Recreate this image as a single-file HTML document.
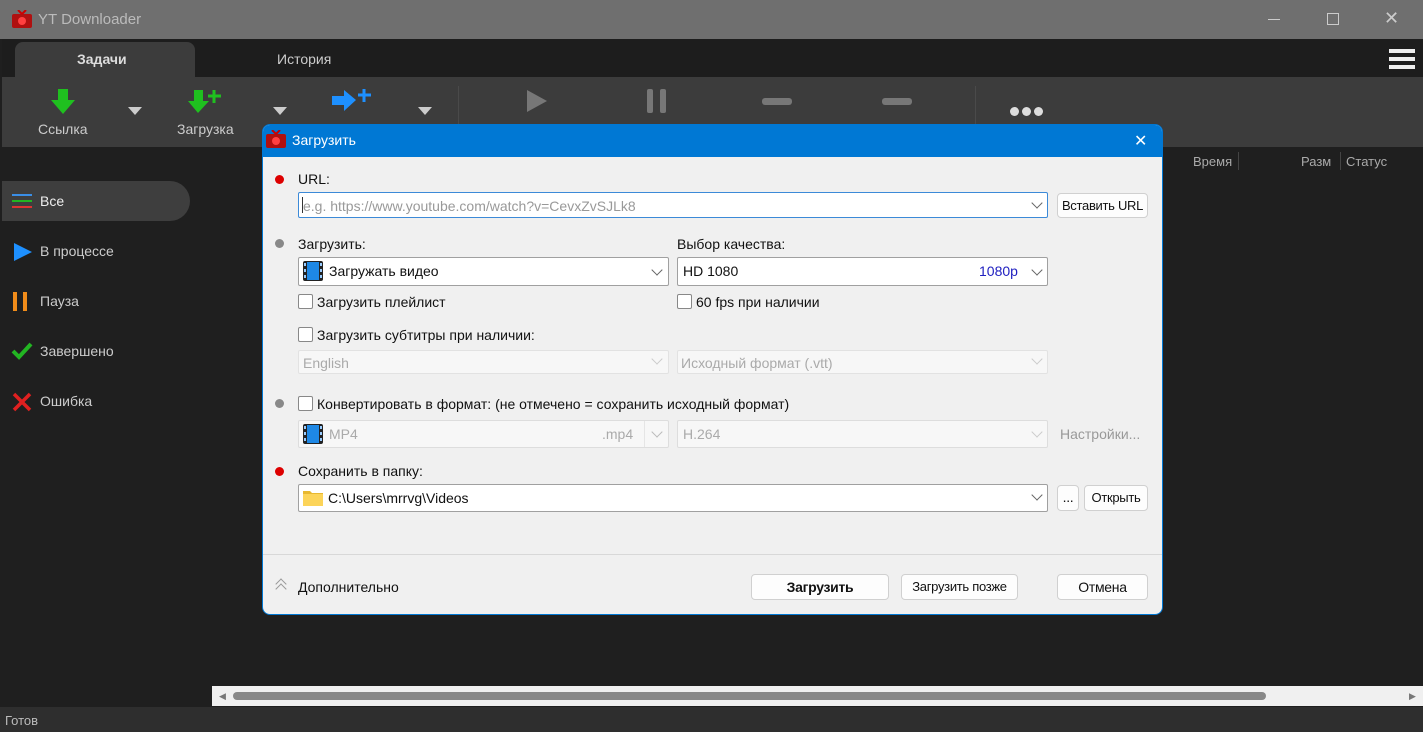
<!DOCTYPE html>
<html><head><meta charset="utf-8"><style>
*{margin:0;padding:0;box-sizing:border-box}
body{width:1423px;height:732px;overflow:hidden;background:#1f1f1f;font-family:"Liberation Sans","DejaVu Sans",sans-serif;position:relative;color:#ddd}
.a{position:absolute}
.t{font-size:14px;white-space:nowrap}
.box{position:absolute;background:#fff;border:1px solid #a0a0a0;border-radius:2px}
.dis{background:#f7f7f7;border:1px solid #e2e2e2}
.chev{position:absolute;width:8px;height:8px;border-right:1.3px solid #666;border-bottom:1.3px solid #666;transform:rotate(45deg)}
.cb{position:absolute;width:15px;height:15px;border:1px solid #888;background:#fff;border-radius:2px}
.btn{position:absolute;background:#fdfdfd;border:1px solid #d0d0d0;border-radius:4px;font-size:14px;color:#111;text-align:center;white-space:nowrap;letter-spacing:-0.3px}
.dot{position:absolute;width:9px;height:9px;border-radius:50%}
.tri{position:absolute;width:0;height:0;border-left:7px solid transparent;border-right:7px solid transparent;border-top:8px solid #ccc}
</style></head><body>
<div class="a" style="left:0;top:0;width:1423px;height:39px;background:#6f6f6f"></div>
<svg class="a" style="left:12px;top:10px" width="20" height="18"><rect x="0" y="4" width="20" height="14" rx="2" fill="#b01010"/><circle cx="10" cy="11" r="4" fill="#ff4040"/><line x1="6" y1="0" x2="10" y2="4" stroke="#c00" stroke-width="2"/><line x1="14" y1="0" x2="10" y2="4" stroke="#c00" stroke-width="2"/></svg>
<div class="a t" style="left:38px;top:11px;color:#bbb;font-size:15px">YT Downloader</div>
<div class="a" style="left:1268px;top:19px;width:12px;height:1px;background:#ccc"></div>
<div class="a" style="left:1327px;top:13px;width:12px;height:12px;border:1px solid #ccc"></div>
<div class="a t" style="left:1384px;top:8px;color:#ccc;font-size:18px">✕</div>
<div class="a" style="left:2px;top:39px;width:1421px;height:38px;background:#1d1d1d"></div>
<div class="a" style="left:15px;top:42px;width:180px;height:35px;background:#3c3c3c;border-radius:8px 8px 0 0"></div>
<div class="a t" style="left:77px;top:51px;color:#ddd;font-weight:bold">Задачи</div>
<div class="a t" style="left:277px;top:51px;color:#ccc">История</div>
<div class="a" style="left:1389px;top:49px;width:26px;height:4px;background:#eee;box-shadow:0 8px 0 #eee,0 16px 0 #eee"></div>
<div class="a" style="left:2px;top:77px;width:1421px;height:70px;background:#3c3c3c"></div>
<svg class="a" style="left:50px;top:89px" width="26" height="26"><path d="M8 0h10v11h7L13 25 1 11h7z" fill="#1fc01f"/></svg>
<div class="a t" style="left:38px;top:121px;color:#ccc">Ссылка</div>
<div class="tri" style="left:128px;top:107px"></div>
<svg class="a" style="left:188px;top:89px" width="40" height="26"><path d="M6 1h9v11h6L10 24 0 12h6z" fill="#1fc01f"/><path d="M26 1v13M20 7h13" stroke="#1fc01f" stroke-width="3"/></svg>
<div class="a t" style="left:177px;top:121px;color:#ccc">Загрузка</div>
<div class="tri" style="left:273px;top:107px"></div>
<svg class="a" style="left:331px;top:88px" width="44" height="26"><path d="M1 8h12V2l12 10-12 11v-6H1z" fill="#1e90ff"/><path d="M33 1v13M27 7h13" stroke="#1e90ff" stroke-width="3"/></svg>
<div class="tri" style="left:418px;top:107px"></div>
<div class="a" style="left:458px;top:86px;width:1px;height:50px;background:#4a4a4a"></div>
<svg class="a" style="left:525px;top:89px" width="24" height="24"><path d="M2 1l20 11L2 23z" fill="#777"/></svg>
<div class="a" style="left:647px;top:89px;width:6px;height:24px;background:#777;border-radius:2px"></div>
<div class="a" style="left:660px;top:89px;width:6px;height:24px;background:#777;border-radius:2px"></div>
<div class="a" style="left:762px;top:98px;width:30px;height:7px;background:#777;border-radius:3px"></div>
<div class="a" style="left:882px;top:98px;width:30px;height:7px;background:#777;border-radius:3px"></div>
<div class="a" style="left:975px;top:86px;width:1px;height:50px;background:#4a4a4a"></div>
<div class="a" style="left:1010px;top:107px;width:9px;height:9px;border-radius:50%;background:#ddd;box-shadow:12px 0 0 #ddd,24px 0 0 #ddd"></div>
<div class="a t" style="left:1193px;top:154px;color:#aaa;font-size:13px">Время</div>
<div class="a" style="left:1238px;top:152px;width:1px;height:18px;background:#444"></div>
<div class="a t" style="left:1301px;top:154px;color:#aaa;font-size:13px">Разм</div>
<div class="a" style="left:1340px;top:152px;width:1px;height:18px;background:#444"></div>
<div class="a t" style="left:1346px;top:154px;color:#aaa;font-size:13px">Статус</div>
<div class="a" style="left:2px;top:181px;width:188px;height:40px;background:#3e3e3e;border-radius:0 20px 20px 0"></div>
<div class="a" style="left:12px;top:194px;width:20px;height:2px;background:#3a8ee6;box-shadow:0 6px 0 #22b522,0 12px 0 #d33"></div>
<div class="a t" style="left:40px;top:193px;color:#eee">Все</div>
<svg class="a" style="left:13px;top:242px" width="20" height="20"><path d="M1 1l18 9L1 19z" fill="#1e90ff"/></svg>
<div class="a t" style="left:40px;top:243px;color:#ccc">В процессе</div>
<div class="a" style="left:13px;top:292px;width:4px;height:19px;background:#f08c1a;box-shadow:10px 0 0 #f08c1a"></div>
<div class="a t" style="left:40px;top:293px;color:#ccc">Пауза</div>
<svg class="a" style="left:11px;top:342px" width="22" height="18"><path d="M2 9l6 6L20 2" stroke="#22b522" stroke-width="4" fill="none"/></svg>
<div class="a t" style="left:40px;top:343px;color:#ccc">Завершено</div>
<svg class="a" style="left:12px;top:392px" width="20" height="20"><path d="M2 2l16 16M18 2L2 18" stroke="#e02020" stroke-width="3.5"/></svg>
<div class="a t" style="left:40px;top:393px;color:#ccc">Ошибка</div>
<div class="a" style="left:212px;top:686px;width:1211px;height:20px;background:#f0f0f0"></div>
<div class="a" style="left:233px;top:692px;width:1033px;height:8px;background:#888;border-radius:4px"></div>
<div class="a" style="left:219px;top:691px;font-size:9px;color:#777">◀</div>
<div class="a" style="left:1409px;top:691px;font-size:9px;color:#777">▶</div>
<div class="a" style="left:0;top:707px;width:1423px;height:25px;background:#2e2e2e"></div>
<div class="a t" style="left:5px;top:713px;color:#bbb;font-size:13px">Готов</div>
<div class="a" style="left:262px;top:124px;width:901px;height:491px;background:#f0f0f0;border-radius:8px;overflow:hidden;border:1px solid #0078d4">
<div class="a" style="left:0;top:0;width:901px;height:32px;background:#0078d4"></div>
</div>
<svg class="a" style="left:266px;top:130px" width="20" height="18"><rect x="0" y="4" width="20" height="14" rx="2" fill="#b01010"/><circle cx="10" cy="11" r="4" fill="#ff4040"/><line x1="6" y1="0" x2="10" y2="4" stroke="#c00" stroke-width="2"/><line x1="14" y1="0" x2="10" y2="4" stroke="#c00" stroke-width="2"/></svg>
<div class="a t" style="left:292px;top:132px;color:#fff">Загрузить</div>
<div class="a t" style="left:1134px;top:131px;color:#fff;font-size:16px">✕</div>
<div style="color:#111">
<div class="dot" style="left:275px;top:175px;background:#d00"></div>
<div class="a t" style="left:298px;top:171px;color:#111">URL:</div>
<div class="box" style="left:298px;top:192px;width:750px;height:26px;border-color:#3c8ad8"></div>
<div class="a" style="left:302px;top:197px;width:1px;height:16px;background:#333"></div>
<div class="a t" style="left:303px;top:198px;color:#999">e.g. https://www.youtube.com/watch?v=CevxZvSJLk8</div>
<div class="chev" style="left:1033px;top:199px"></div>
<div class="btn" style="left:1057px;top:193px;width:91px;height:25px;line-height:23px;font-size:13px">Вставить URL</div>
<div class="dot" style="left:275px;top:239px;background:#888"></div>
<div class="a t" style="left:298px;top:236px;color:#111">Загрузить:</div>
<div class="a t" style="left:677px;top:236px;color:#111">Выбор качества:</div>
<div class="box" style="left:298px;top:257px;width:371px;height:29px"></div>
<svg class="a" style="left:303px;top:261px" width="20" height="20"><rect width="20" height="20" rx="2" fill="#222"/><rect x="4" y="1" width="12" height="18" fill="#1e88e5"/><g fill="#9cf"><rect x="1" y="2" width="2" height="3"/><rect x="1" y="8" width="2" height="3"/><rect x="1" y="14" width="2" height="3"/><rect x="17" y="2" width="2" height="3"/><rect x="17" y="8" width="2" height="3"/><rect x="17" y="14" width="2" height="3"/></g></svg>
<div class="a t" style="left:329px;top:263px;color:#111">Загружать видео</div>
<div class="chev" style="left:653px;top:266px"></div>
<div class="box" style="left:677px;top:257px;width:371px;height:29px"></div>
<div class="a t" style="left:683px;top:263px;color:#111">HD 1080</div>
<div class="a t" style="left:979px;top:263px;color:#2020c0">1080p</div>
<div class="chev" style="left:1033px;top:266px"></div>
<div class="cb" style="left:298px;top:294px"></div>
<div class="a t" style="left:317px;top:294px;color:#111">Загрузить плейлист</div>
<div class="cb" style="left:677px;top:294px"></div>
<div class="a t" style="left:696px;top:294px;color:#111">60 fps при наличии</div>
<div class="cb" style="left:298px;top:327px"></div>
<div class="a t" style="left:317px;top:327px;color:#111">Загрузить субтитры при наличии:</div>
<div class="box dis" style="left:298px;top:350px;width:371px;height:24px"></div>
<div class="a t" style="left:303px;top:355px;color:#aaa">English</div>
<div class="chev" style="left:653px;top:355px;border-color:#ccc"></div>
<div class="box dis" style="left:677px;top:350px;width:371px;height:24px"></div>
<div class="a t" style="left:681px;top:355px;color:#aaa">Исходный формат (.vtt)</div>
<div class="chev" style="left:1033px;top:355px;border-color:#ccc"></div>
<div class="dot" style="left:275px;top:399px;background:#888"></div>
<div class="cb" style="left:298px;top:396px"></div>
<div class="a t" style="left:317px;top:396px;color:#111">Конвертировать в формат: (не отмечено = сохранить исходный формат)</div>
<div class="box dis" style="left:298px;top:420px;width:371px;height:28px;border-color:#ddd"></div>
<svg class="a" style="left:303px;top:424px" width="20" height="20"><rect width="20" height="20" rx="2" fill="#222"/><rect x="4" y="1" width="12" height="18" fill="#1e88e5"/><g fill="#9cf"><rect x="1" y="2" width="2" height="3"/><rect x="1" y="8" width="2" height="3"/><rect x="1" y="14" width="2" height="3"/><rect x="17" y="2" width="2" height="3"/><rect x="17" y="8" width="2" height="3"/><rect x="17" y="14" width="2" height="3"/></g></svg>
<div class="a t" style="left:329px;top:426px;color:#aaa">MP4</div>
<div class="a t" style="left:602px;top:426px;color:#aaa">.mp4</div>
<div class="a" style="left:644px;top:421px;width:1px;height:26px;background:#e5e5e5"></div>
<div class="chev" style="left:653px;top:428px;border-color:#bbb"></div>
<div class="box dis" style="left:677px;top:420px;width:371px;height:28px;border-color:#ddd"></div>
<div class="a t" style="left:683px;top:426px;color:#aaa">H.264</div>
<div class="chev" style="left:1033px;top:428px;border-color:#ccc"></div>
<div class="a t" style="left:1060px;top:426px;color:#999">Настройки...</div>
<div class="dot" style="left:275px;top:467px;background:#d00"></div>
<div class="a t" style="left:298px;top:463px;color:#111">Сохранить в папку:</div>
<div class="box" style="left:298px;top:484px;width:750px;height:28px"></div>
<svg class="a" style="left:303px;top:489px" width="20" height="17"><path d="M0 2h7l2 2h11v13H0z" fill="#e8b830"/><rect x="0" y="5" width="20" height="12" fill="#fcd459"/></svg>
<div class="a t" style="left:328px;top:490px;color:#111">C:\Users\mrrvg\Videos</div>
<div class="chev" style="left:1033px;top:491px"></div>
<div class="btn" style="left:1057px;top:485px;width:22px;height:26px;line-height:22px">...</div>
<div class="btn" style="left:1084px;top:485px;width:64px;height:26px;line-height:24px;font-size:13px">Открыть</div>
<div class="a" style="left:263px;top:554px;width:899px;height:1px;background:#d8d8d8"></div>
<div class="a" style="left:277px;top:580px;width:8px;height:8px;border-left:1px solid #999;border-top:1px solid #999;transform:rotate(45deg)"></div>
<div class="a" style="left:277px;top:585px;width:8px;height:8px;border-left:1px solid #999;border-top:1px solid #999;transform:rotate(45deg)"></div>
<div class="a t" style="left:298px;top:579px;color:#111">Дополнительно</div>
<div class="btn" style="left:751px;top:574px;width:138px;height:26px;line-height:24px;font-weight:bold">Загрузить</div>
<div class="btn" style="left:901px;top:574px;width:117px;height:26px;line-height:24px;font-size:13px">Загрузить позже</div>
<div class="btn" style="left:1057px;top:574px;width:91px;height:26px;line-height:24px">Отмена</div>
</div>
</body></html>
